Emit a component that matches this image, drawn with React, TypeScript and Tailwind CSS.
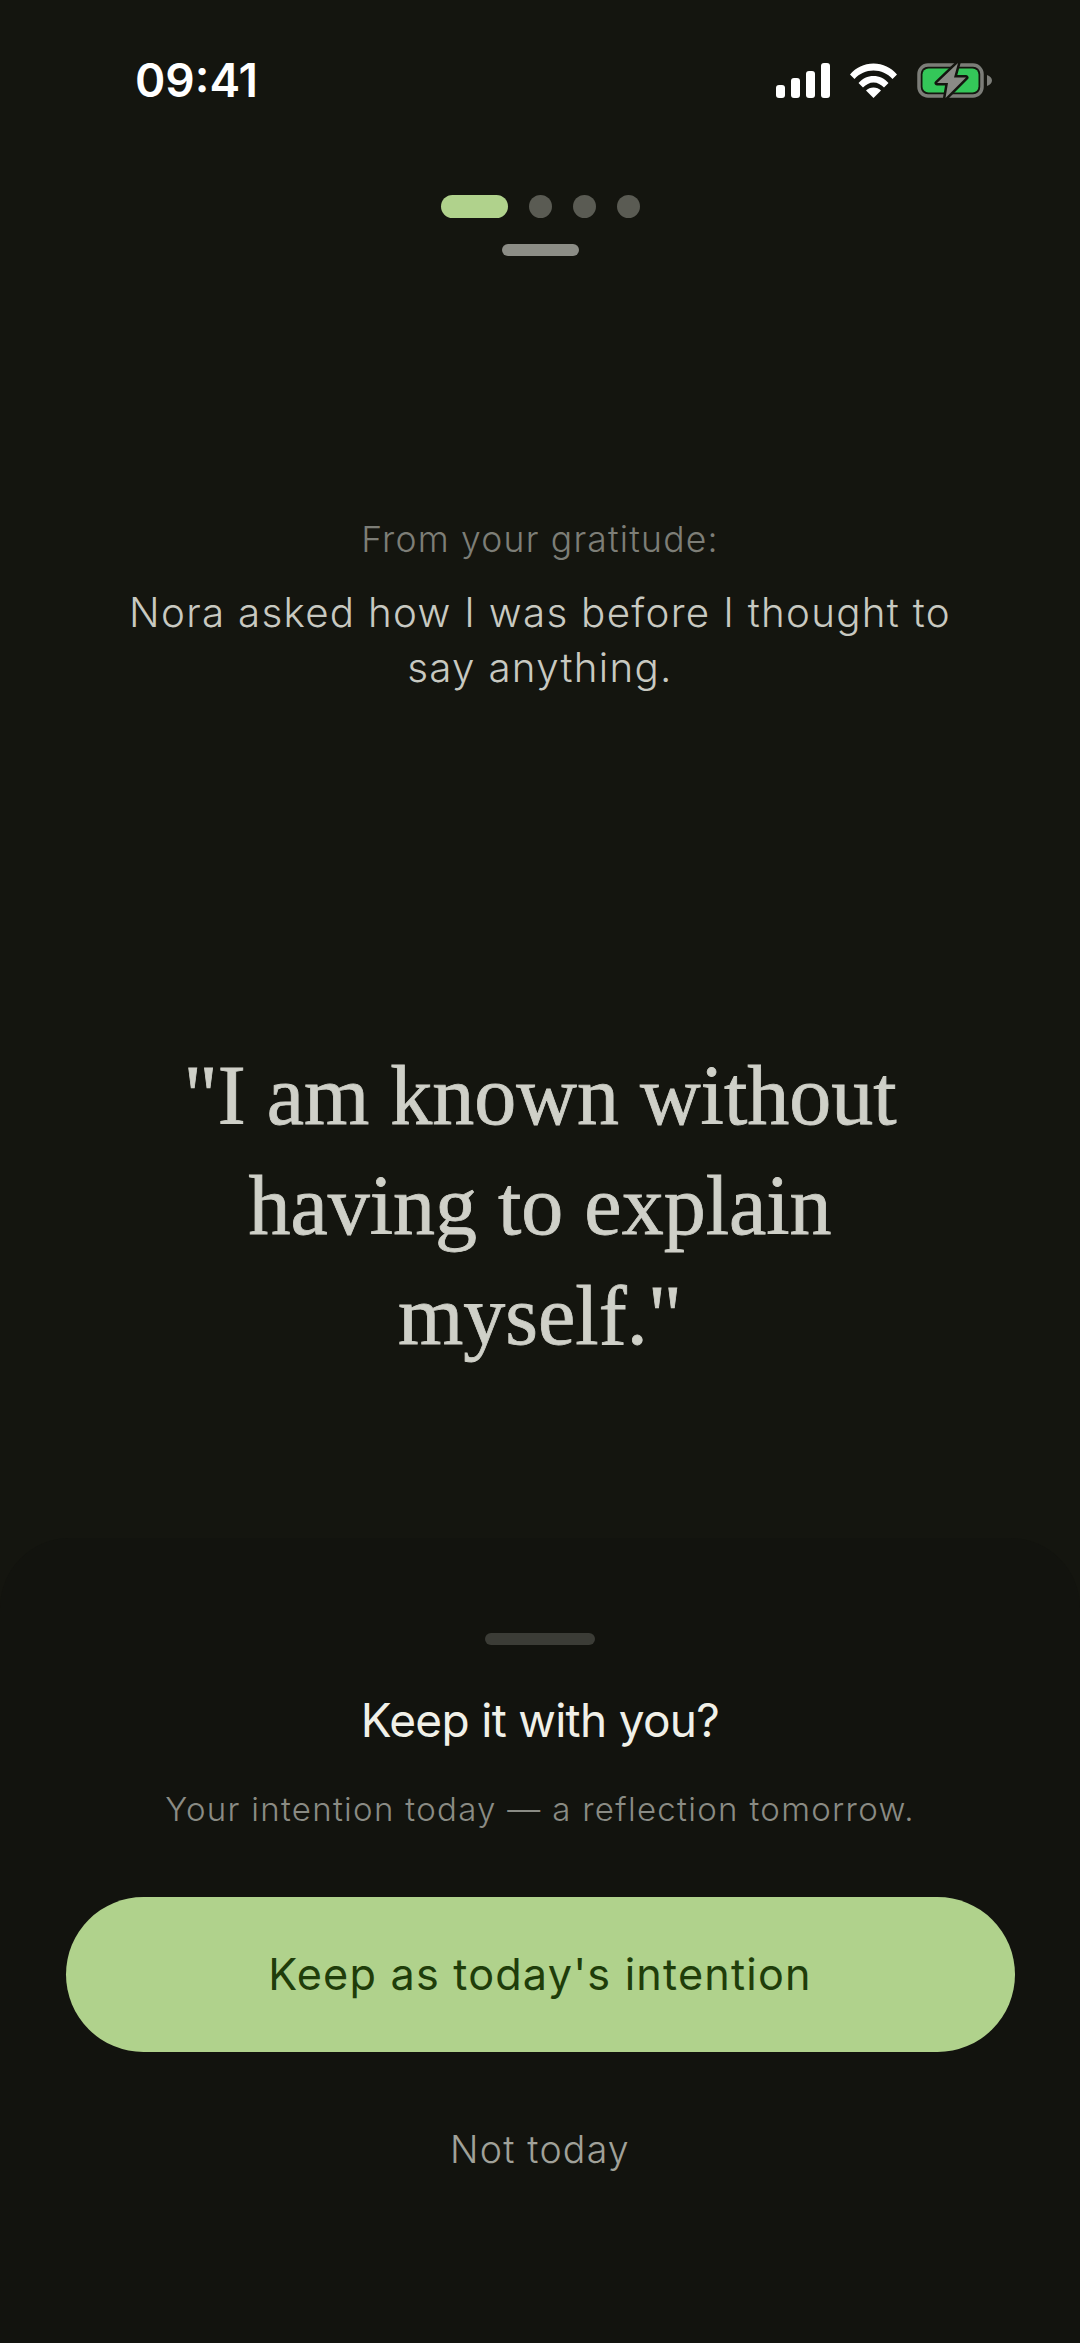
const sans = "font-['Inter',sans-serif]"

function SignalIcon() {
  return (
    <svg width="54" height="35" viewBox="0 0 54 35" fill="#fff">
      <rect x="0" y="22" width="9" height="13" rx="3" />
      <rect x="15" y="15" width="9" height="20" rx="3" />
      <rect x="30" y="8" width="9" height="27" rx="3" />
      <rect x="45" y="0" width="9" height="35" rx="3" />
    </svg>
  )
}

function WifiIcon() {
  return (
    <svg width="47" height="35" viewBox="0 0 47 35" fill="#fff">
      <path d="M0 11.5C6 4.500 14 0.500 23.500 0.500S41 4.500 47 11.500L42.500 16C37.500 10.500 31 7.500 23.500 7.500S9.500 10.500 4.500 16Z" />
      <path d="M8.500 20C12.500 15.500 17.500 13 23.500 13S34.500 15.500 38.500 20L34 24.500C31 21.500 27.500 19.500 23.500 19.500S16 21.500 13 24.500Z" />
      <path d="M16 27.500C18 25.500 20.500 24.500 23.500 24.500S29 25.500 31 27.500L23.500 35Z" />
    </svg>
  )
}

function BatteryIcon() {
  return (
    <svg width="75" height="37" viewBox="0 0 75 37" className="-my-px">
      <rect x="2" y="3" width="63" height="31" rx="9" fill="none" stroke="#7c7d78" strokeWidth="3.500" />
      <rect x="5.500" y="6.500" width="56" height="24" rx="6" fill="#34c759" />
      <path d="M70 13C73 14 75 16 75 18.500S73 23 70 24Z" fill="#7c7d78" />
      <path d="M41 1L20 21H31L28.500 36L49 15.500H37Z" fill="#8a8b86" stroke="#14150f" strokeWidth="5" strokeLinejoin="round" paintOrder="stroke" />
    </svg>
  )
}

export default function App() {
  return (
    <div className={`${sans} flex h-[2343px] w-[1080px] flex-col overflow-hidden bg-[#14150f]`}>
      <div className="flex h-[160px] items-start justify-between pr-[88px] pl-[135px] pt-[55px]">
        <span className="text-[46px] leading-[50px] font-semibold text-white">09:41</span>
        <div className="mt-[8px] flex items-center gap-[20px]">
          <SignalIcon />
          <WifiIcon />
          <BatteryIcon />
        </div>
      </div>

      <div className="mt-[35px] flex items-center justify-center gap-[21px]">
        <div className="h-[23px] w-[67px] rounded-full bg-[#b0d28c]" />
        <div className="h-[23px] w-[23px] rounded-full bg-[#5a5b53]" />
        <div className="h-[23px] w-[23px] rounded-full bg-[#5a5b53]" />
        <div className="h-[23px] w-[23px] rounded-full bg-[#5a5b53]" />
      </div>
      <div className="mx-auto mt-[26px] h-[12px] w-[77px] rounded-full bg-[#8c8d86]" />

      <div className="mt-[262px] flex flex-col items-center text-center">
        <p className="text-[35.500px] leading-[44px] font-light tracking-[1.2px] text-[#7d7e77]">From your gratitude:</p>
        <p className="mt-[23px] w-[860px] text-[40.300px] leading-[55px] font-light tracking-[1.3px] text-[#c8c9c1]">
          Nora asked how I was before I thought to say anything.
        </p>
      </div>

      <div className="mt-[346px] flex justify-center">
        <p className="w-[800px] text-center font-['Liberation_Serif',serif] text-[84px] leading-[110px] text-[#cfd0c8] [-webkit-text-stroke:0.8px_#cfd0c8]">
          "I am known without having to explain myself."
        </p>
      </div>

      <div className="mt-auto flex h-[805px] flex-col items-center rounded-t-[70px] bg-[#12130e] pt-[95px]">
        <div className="h-[12px] w-[110px] rounded-full bg-[#3b3c36]" />
        <h2 className="mt-[45px] text-[46px] leading-[60px] font-normal tracking-[-0.700px] text-[#f0f0e8]">Keep it with you?</h2>
        <p className="mt-[37px] text-[33px] leading-[44px] font-light tracking-[1.3px] text-[#8a8b84]">
          Your intention today — a reflection tomorrow.
        </p>
        <button className="mt-[66px] h-[155px] w-[949px] rounded-full bg-[#b0d28c] text-[43.200px] font-normal tracking-[1.2px] text-[#1f3d0a]">
          Keep as today's intention
        </button>
        <button className="mt-[73px] text-[37.500px] leading-[50px] font-light tracking-[1.2px] text-[#a0a199]">Not today</button>
      </div>
    </div>
  )
}
